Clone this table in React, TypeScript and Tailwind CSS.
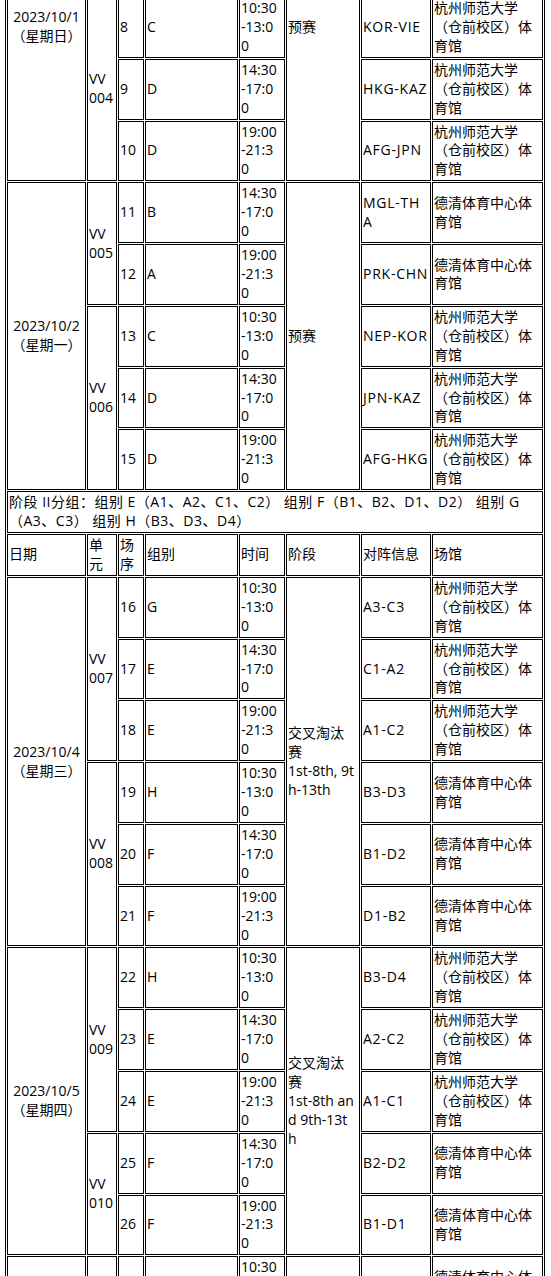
import type { ReactNode } from 'react'

// Schedule table, scrolled part-way: the top rows sit above the viewport.

type Match = { no: number; group: string; time: string; vs: string; venue: string }
type Unit = { code: string; matches: Match[] }
type Day = { date: string; week: string; stage: ReactNode; units: Unit[] }

const HZ = '杭州师范大学（仓前校区）体育馆'
const DQ = '德清体育中心体育馆'

const before: Day[] = [
  {
    date: '2023/10/1',
    week: '（星期日）',
    stage: '预赛',
    units: [
      {
        code: '003',
        matches: [
          { no: 6, group: 'A', time: '14:30-17:00', vs: 'CHN-IND', venue: DQ },
          { no: 7, group: 'B', time: '19:00-21:30', vs: 'THA-QAT', venue: DQ }
        ]
      },
      {
        code: '004',
        matches: [
          { no: 8, group: 'C', time: '10:30-13:00', vs: 'KOR-VIE', venue: HZ },
          { no: 9, group: 'D', time: '14:30-17:00', vs: 'HKG-KAZ', venue: HZ },
          { no: 10, group: 'D', time: '19:00-21:30', vs: 'AFG-JPN', venue: HZ }
        ]
      }
    ]
  },
  {
    date: '2023/10/2',
    week: '（星期一）',
    stage: '预赛',
    units: [
      {
        code: '005',
        matches: [
          { no: 11, group: 'B', time: '14:30-17:00', vs: 'MGL-THA', venue: DQ },
          { no: 12, group: 'A', time: '19:00-21:30', vs: 'PRK-CHN', venue: DQ }
        ]
      },
      {
        code: '006',
        matches: [
          { no: 13, group: 'C', time: '10:30-13:00', vs: 'NEP-KOR', venue: HZ },
          { no: 14, group: 'D', time: '14:30-17:00', vs: 'JPN-KAZ', venue: HZ },
          { no: 15, group: 'D', time: '19:00-21:30', vs: 'AFG-HKG', venue: HZ }
        ]
      }
    ]
  }
]

const after: Day[] = [
  {
    date: '2023/10/4',
    week: '（星期三）',
    stage: (
      <>
        交叉淘汰赛
        <br />
        1st-8th, 9th-13th
      </>
    ),
    units: [
      {
        code: '007',
        matches: [
          { no: 16, group: 'G', time: '10:30-13:00', vs: 'A3-C3', venue: HZ },
          { no: 17, group: 'E', time: '14:30-17:00', vs: 'C1-A2', venue: HZ },
          { no: 18, group: 'E', time: '19:00-21:30', vs: 'A1-C2', venue: HZ }
        ]
      },
      {
        code: '008',
        matches: [
          { no: 19, group: 'H', time: '10:30-13:00', vs: 'B3-D3', venue: DQ },
          { no: 20, group: 'F', time: '14:30-17:00', vs: 'B1-D2', venue: DQ },
          { no: 21, group: 'F', time: '19:00-21:30', vs: 'D1-B2', venue: DQ }
        ]
      }
    ]
  },
  {
    date: '2023/10/5',
    week: '（星期四）',
    stage: (
      <>
        交叉淘汰赛
        <br />
        1st-8th and 9th-13th
      </>
    ),
    units: [
      {
        code: '009',
        matches: [
          { no: 22, group: 'H', time: '10:30-13:00', vs: 'B3-D4', venue: HZ },
          { no: 23, group: 'E', time: '14:30-17:00', vs: 'A2-C2', venue: HZ },
          { no: 24, group: 'E', time: '19:00-21:30', vs: 'A1-C1', venue: HZ }
        ]
      },
      {
        code: '010',
        matches: [
          { no: 25, group: 'F', time: '14:30-17:00', vs: 'B2-D2', venue: DQ },
          { no: 26, group: 'F', time: '19:00-21:30', vs: 'B1-D1', venue: DQ }
        ]
      }
    ]
  },
  {
    date: '2023/10/6',
    week: '（星期五）',
    stage: '排位赛',
    units: [
      {
        code: '011',
        matches: [
          { no: 27, group: 'G', time: '10:30-13:00', vs: 'E4-F3', venue: DQ },
          { no: 28, group: 'H', time: '14:30-17:00', vs: 'F4-E3', venue: DQ }
        ]
      }
    ]
  }
]

const cell = 'border border-black p-[1px] align-middle'

function DayRows({ day }: { day: Day }) {
  const total = day.units.reduce((n, u) => n + u.matches.length, 0)
  return (
    <>
      {day.units.map((u, ui) =>
        u.matches.map((m, mi) => (
          <tr key={m.no}>
            {ui === 0 && mi === 0 && (
              <td rowSpan={total} className={cell + ' text-center'}>
                {day.date}
                <br />
                {day.week}
              </td>
            )}
            {mi === 0 && (
              <td rowSpan={u.matches.length} className={cell}>
                VV {u.code}
              </td>
            )}
            <td className={cell}>{m.no}</td>
            <td className={cell}>{m.group}</td>
            <td className={cell + ' break-all pr-[5px]'}>{m.time}</td>
            {ui === 0 && mi === 0 && (
              <td rowSpan={total} className={cell + ' break-all pr-[4.2px]'}>
                {day.stage}
              </td>
            )}
            <td className={cell + ' break-all tracking-[0.75px]'}>{m.vs}</td>
            <td className={cell}>{m.venue}</td>
          </tr>
        ))
      )}
    </>
  )
}

const heads = ['日期', '单元', '场序', '组别', '时间', '阶段', '对阵信息', '场馆']

export default function App() {
  return (
    <div className="h-[1276px] overflow-hidden bg-white pl-[5px] font-['Open_Sans','Noto_Sans_CJK_SC',sans-serif] text-[14px] leading-[18.92px] text-black">
      <table className="-mt-[128.5px] w-[540px] table-fixed border-separate border-spacing-[1px] border border-black">
        <colgroup>
          <col className="w-[79px]" />
          <col className="w-[30px]" />
          <col className="w-[26px]" />
          <col className="w-[93px]" />
          <col className="w-[46px]" />
          <col className="w-[74px]" />
          <col className="w-[70px]" />
          <col className="w-[111px]" />
        </colgroup>
        <tbody>
          {before.map((d) => (
            <DayRows key={d.date} day={d} />
          ))}
          <tr>
            <td colSpan={8} className={cell + ' tracking-[0.5px]'}>
              阶段 II分组：组别 E（A1、A2、C1、C2） 组别 F（B1、B2、D1、D2） 组别 G（A3、C3） 组别 H（B3、D3、D4）
            </td>
          </tr>
          <tr>
            {heads.map((h) => (
              <td key={h} className={cell}>
                {h}
              </td>
            ))}
          </tr>
          {after.map((d) => (
            <DayRows key={d.date} day={d} />
          ))}
        </tbody>
      </table>
    </div>
  )
}
